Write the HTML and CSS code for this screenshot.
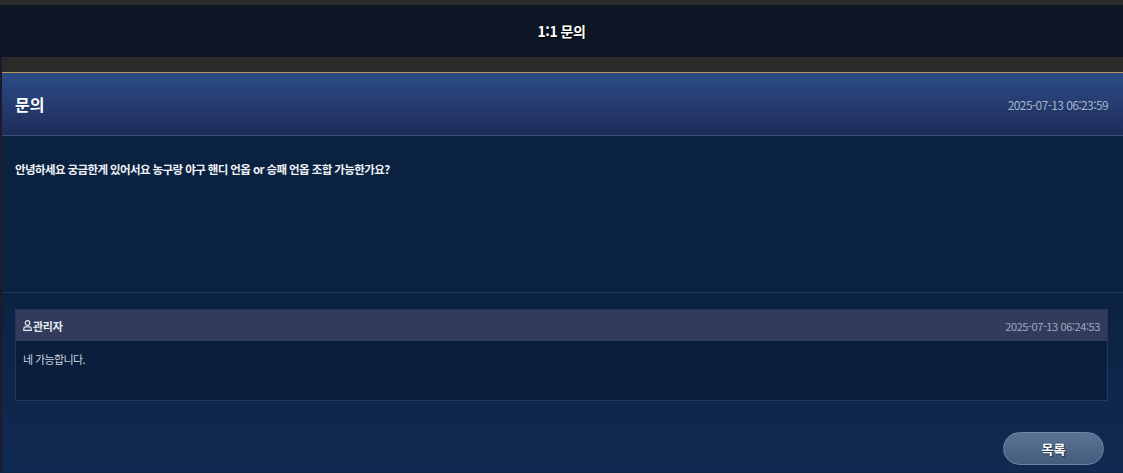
FILE: index.html
```html
<!DOCTYPE html>
<html lang="ko">
<head>
    <meta charset="UTF-8">
    <meta name="viewport" content="width=device-width, initial-scale=1.0">
    <title>1:1 문의</title>
    <link rel="stylesheet" href="styles.css">
</head>
<body>
    <div class="topline"></div>
    <div class="titlebar">
        <h1>1:1 문의</h1>
    </div>

    <div class="page">
        <div class="subbar"></div>

        <div class="qna-head">
            <h2>문의</h2>
            <span class="date">2025-07-13 06:23:59</span>
        </div>

        <div class="qna-body">
            <p>안녕하세요 궁금한게 있어서요 농구랑 야구 핸디 언옵 or 승패 언옵 조합 가능한가요?</p>
        </div>

        <div class="reply-area">
            <div class="reply">
                <div class="reply-head">
                    <span class="writer">
                        <!-- user icon -->
                        <svg class="user-icon" width="9" height="11" viewBox="0 0 9 11">
                            <circle cx="4.5" cy="3" r="2.3" fill="none" stroke="#e4e8f0" stroke-width="1.2"/>
                            <path d="M0.8 10.3 V8.6 Q0.8 6.8 2.6 6.8 H6.4 Q8.2 6.8 8.2 8.6 V10.3 Z" fill="none" stroke="#e4e8f0" stroke-width="1.2"/>
                        </svg>관리자
                    </span>
                    <span class="date">2025-07-13 06:24:53</span>
                </div>
                <div class="reply-body">네 가능합니다.</div>
            </div>

            <div class="actions">
                <button type="button" class="btn-list">목록</button>
            </div>
        </div>
    </div>
</body>
</html>
```

FILE: styles.css
```css
body {
    margin: 0;
    font-family: "Noto Sans CJK KR", "Noto Sans", sans-serif;
    background: #0f2749;
    color: #fff;
    overflow: hidden;
}

.topline {
    height: 5px;
    background-color: #2b2b2c;
}

.titlebar {
    height: 52px;
    background-color: #0e1626;
    display: flex;
    justify-content: center;
    align-items: center;
}

.titlebar h1 {
    margin: 0;
    font-size: 14px;
    font-weight: bold;
    letter-spacing: -0.5px;
    text-shadow: 1px 1px 1px #000;
}

.page {
    border-left: 2px solid #1c1a2c;
    background: linear-gradient(to bottom, #0a2140 40%, #112a52 100%);
}

.subbar {
    height: 15px;
    background-color: #2a2a2b;
    border-bottom: 1px solid #b8955a;
}

.qna-head {
    height: 62px;
    padding: 0 15px 0 13px;
    display: flex;
    justify-content: space-between;
    align-items: center;
    background: linear-gradient(to bottom, #2c4b86, #1e2c59);
    border-bottom: 1px solid #34507c;
}

.qna-head h2 {
    margin: 0;
    font-size: 16px;
    font-weight: bold;
}

.date {
    font-size: 12px;
    color: #a6b3cc;
    letter-spacing: -0.6px;
}

.qna-body {
    height: 131px;
    padding: 25px 13px 0;
    background-color: #0a2140;
    border-bottom: 1px solid #1b3658;
}

.qna-body p {
    margin: 0;
    font-size: 11.5px;
    line-height: 16px;
    font-weight: bold;
    color: #eef1f6;
    letter-spacing: -0.6px;
}

.reply-area {
    padding: 16px 15px 7px 13px;
    background: linear-gradient(to bottom, #0b2242, #112a51);
}

.reply {
    border: 1px solid #25385b;
}

.reply-head {
    height: 31px;
    padding: 0 7px;
    display: flex;
    justify-content: space-between;
    align-items: center;
    background-color: #323b5b;
}

.writer {
    display: flex;
    align-items: center;
    font-size: 11px;
    font-weight: bold;
    color: #e4e8f0;
    letter-spacing: -0.3px;
}

.user-icon {
    margin-right: 1px;
}

.reply-head .date {
    font-size: 11px;
    color: #a0a9bf;
    letter-spacing: -0.4px;
}

.reply-body {
    height: 59px;
    padding: 10px 7px 0;
    box-sizing: border-box;
    background-color: #0a1f3c;
    font-size: 11px;
    color: #cdd4df;
    letter-spacing: -0.6px;
}

.actions {
    display: flex;
    justify-content: flex-end;
    padding: 31px 4px 0 0;
}

.btn-list {
    width: 101px;
    height: 33px;
    border: 1px solid #6e86a5;
    border-radius: 17px;
    background: linear-gradient(to bottom, #5a7293, #445d7d);
    color: #fff;
    font-family: inherit;
    font-size: 13px;
    font-weight: bold;
    text-shadow: 1px 1px 1px #1c2a40;
    cursor: pointer;
}
```
